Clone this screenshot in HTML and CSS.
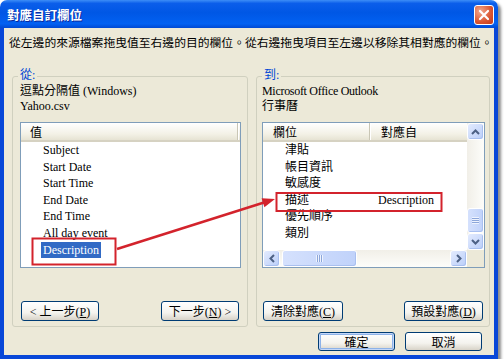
FILE: index.html
```html
<!DOCTYPE html>
<html lang="zh-Hant">
<head>
  <meta charset="UTF-8" />
  <title>對應自訂欄位</title>
  <link rel="stylesheet" href="styles.css">
</head>

<body>

  <div class="window">
    <div class="titlebar">
      <span class="title">對應自訂欄位</span>
      <button class="close-btn" aria-label="關閉">
        <svg width="12" height="12" viewBox="0 0 12 12">
          <path d="M2 2 L10 10 M10 2 L2 10" stroke="#fff" stroke-width="2.2" stroke-linecap="round" />
        </svg>
      </button>
    </div>

    <div class="client">
      <p class="hint">從左邊的來源檔案拖曳值至右邊的目的欄位。從右邊拖曳項目至左邊以移除其相對應的欄位。</p>

      <div class="groups">
        <!-- Quelle -->
        <fieldset class="group group-from">
          <legend>從:</legend>
          <div class="src-name">逗點分隔值 (Windows)</div>
          <div class="src-file">Yahoo.csv</div>

          <div class="listview">
            <div class="lv-header">
              <span class="lv-col lv-col-value">值</span>
            </div>
            <ul class="lv-rows">
              <li>Subject</li>
              <li>Start Date</li>
              <li>Start Time</li>
              <li>End Date</li>
              <li>End Time</li>
              <li>All day event</li>
              <li><span class="selected">Description</span></li>
            </ul>
          </div>

          <div class="group-buttons">
            <button class="btn btn-prev">&lt; 上一步(<u>P</u>)</button>
            <button class="btn btn-next">下一步(<u>N</u>) &gt;</button>
          </div>
        </fieldset>

        <!-- Ziel -->
        <fieldset class="group group-to">
          <legend>到:</legend>
          <div class="src-name">Microsoft Office Outlook</div>
          <div class="src-file">行事曆</div>

          <div class="listview listview-grid">
            <div class="lv-main">
              <div class="lv-header">
                <span class="lv-col lv-col-field">欄位</span>
                <span class="lv-col lv-col-map">對應自</span>
              </div>
              <ul class="lv-rows lv-rows-2col">
                <li><span>津貼</span><span></span></li>
                <li><span>帳目資訊</span><span></span></li>
                <li><span>敏感度</span><span></span></li>
                <li><span>描述</span><span>Description</span></li>
                <li><span>優先順序</span><span></span></li>
                <li><span>類別</span><span></span></li>
              </ul>
            </div>

            <div class="vscroll">
              <div class="sb-btn">
                <svg width="9" height="6" viewBox="0 0 9 6"><polyline points="1,5 4.5,1.5 8,5" fill="none" stroke="#4D6185" stroke-width="2" /></svg>
              </div>
              <div class="sb-track sb-track-v">
                <div class="sb-thumb sb-thumb-v"><span class="grip grip-h"></span></div>
              </div>
              <div class="sb-btn">
                <svg width="9" height="6" viewBox="0 0 9 6"><polyline points="1,1 4.5,4.5 8,1" fill="none" stroke="#4D6185" stroke-width="2" /></svg>
              </div>
            </div>

            <div class="hscroll">
              <div class="sb-btn">
                <svg width="6" height="9" viewBox="0 0 6 9"><polyline points="5,1 1.5,4.5 5,8" fill="none" stroke="#4D6185" stroke-width="2" /></svg>
              </div>
              <div class="sb-track sb-track-h">
                <div class="sb-thumb sb-thumb-h"><span class="grip grip-v"></span></div>
              </div>
              <div class="sb-btn">
                <svg width="6" height="9" viewBox="0 0 6 9"><polyline points="1,1 4.5,4.5 1,8" fill="none" stroke="#4D6185" stroke-width="2" /></svg>
              </div>
            </div>

            <div class="sb-corner"></div>
          </div>

          <div class="group-buttons">
            <button class="btn btn-clear">清除對應(<u>C</u>)</button>
            <button class="btn btn-default">預設對應(<u>D</u>)</button>
          </div>
        </fieldset>
      </div>

      <div class="dialog-buttons">
        <button class="btn btn-ok">確定</button>
        <button class="btn btn-cancel">取消</button>
      </div>
    </div>

    <!-- Markierungen / Pfeil -->
    <svg class="annotations" width="498" height="359" viewBox="0 0 498 359">
      <rect x="32.5" y="238.5" width="83" height="26" fill="none" stroke="#D3232C" stroke-width="2" />
      <rect x="276.5" y="193" width="165" height="18" fill="none" stroke="#D3232C" stroke-width="2" />
      <line x1="117" y1="249" x2="264" y2="202.5" stroke="#D3232C" stroke-width="2.5" />
      <polygon points="275,199 264.4,207.3 261.6,198.3" fill="#D3232C" />
    </svg>
  </div>

</body>
</html>
```

FILE: styles.css
```css
body {
  margin: 0;
  background: #fff;
  font-family: "Liberation Serif", "Noto Sans CJK TC", serif;
  font-size: 12px;
  color: #000;
}

.window {
  position: relative;
  width: 498px;
  height: 359px;
  display: flex;
  flex-direction: column;
  border-radius: 7px 7px 0 0;
  box-shadow: 3px 3px 3px rgba(0,0,0,0.45);
}

.titlebar {
  flex: none;
  height: 28px;
  box-sizing: border-box;
  padding: 1px 4px 0 7px;
  display: flex;
  align-items: center;
  justify-content: space-between;
  border-radius: 7px 7px 0 0;
  background: linear-gradient(#3D8EF7 0%, #0B5EEA 12%, #0057E5 45%, #0261F2 85%, #0049D3 100%);
}

.title {
  color: #fff;
  font-family: "Noto Sans CJK TC", sans-serif;
  font-weight: bold;
  font-size: 12.5px;
  line-height: 16px;
  text-shadow: 1px 1px 0 #0A2A9C;
}

.close-btn {
  width: 20px;
  height: 20px;
  padding: 0;
  border: 1px solid #fff;
  border-radius: 3px;
  background: radial-gradient(circle at 30% 30%, #F2A98F, #DA5530 60%, #C23B1C);
  display: flex;
  align-items: center;
  justify-content: center;
}

.client {
  flex: 1;
  background: #ECE9D8;
  border: 4px solid #0847D8;
  border-top: 0;
  padding-top: 6px;
  display: flex;
  flex-direction: column;
}

.hint {
  margin: 0;
  padding-left: 5px;
  font-family: "Noto Sans CJK TC", sans-serif;
  font-size: 11.8px;
  line-height: 16px;
  white-space: nowrap;
}

.groups {
  display: flex;
  gap: 8px;
  margin-top: 18px;
  padding-left: 8px;
}

.group {
  margin: 0;
  height: 259px;
  min-width: 0;
  box-sizing: border-box;
  border: 1px solid #D0D0BF;
  border-radius: 3px;
}

.group-from {
  width: 236px;
  padding: 0 6px 5px 7px;
}

.group-to {
  width: 234px;
  padding: 0 4px 5px 5px;
}

.group legend {
  padding: 0 2px 2px;
  line-height: 14px;
  color: #0046D5;
}

.group-from legend {
  margin-left: -2px;
}

.src-name {
  line-height: 14px;
  white-space: nowrap;
}

.group-to .src-name {
  letter-spacing: -0.3px;
}

.src-file {
  line-height: 16px;
  white-space: nowrap;
}

/* Listenansicht */
.listview {
  margin-top: 8px;
  height: 146px;
  box-sizing: border-box;
  border: 1px solid #7F9DB9;
  background: #fff;
  overflow: hidden;
}

.lv-header {
  height: 19px;
  box-sizing: border-box;
  display: flex;
  background: linear-gradient(#FFFFFF, #F3F1E6 65%, #E6E3D3);
  border-bottom: 2px solid #D6D2C2;
}

.lv-col {
  box-sizing: border-box;
  line-height: 17px;
  font-family: "Noto Sans CJK TC", sans-serif;
  border-right: 1px solid #C9C6B5;
  box-shadow: 1px 0 0 #fff;
}

.lv-col-value {
  width: 217px;
  padding-left: 9px;
}

.lv-col-field {
  width: 107px;
  padding-left: 10px;
}

.lv-col-map {
  flex: 1;
  padding-left: 11px;
  border-right: 0;
  box-shadow: none;
}

.lv-rows {
  margin: 0;
  padding: 0;
  list-style: none;
}

.lv-rows li {
  height: 16.6px;
  line-height: 16.6px;
  padding-left: 22px;
  white-space: nowrap;
}

.selected {
  margin-left: -2px;
  padding: 1px 2px;
  background: #316AC5;
  color: #fff;
}

.lv-rows-2col li {
  display: grid;
  grid-template-columns: 107px 1fr;
  padding-left: 0;
}

.lv-rows-2col li span:first-child {
  padding-left: 22px;
}

.lv-rows-2col li span:last-child {
  padding-left: 8px;
}

.listview-grid {
  display: grid;
  grid-template-columns: 1fr 17px;
  grid-template-rows: 1fr 17px;
}

.lv-main {
  overflow: hidden;
  min-width: 0;
}

/* Bildlaufleisten */
.vscroll {
  display: flex;
  flex-direction: column;
  background: linear-gradient(90deg, #F1EFE8, #FDFDFA);
}

.hscroll {
  display: flex;
  background: linear-gradient(#F1EFE8, #FDFDFA);
}

.sb-btn {
  flex: none;
  width: 17px;
  height: 17px;
  box-sizing: border-box;
  border: 1px solid #fff;
  border-radius: 3px;
  background: linear-gradient(135deg, #E3EBFE, #BACEF9);
  box-shadow: inset -1px -1px 0 #A9C0F0;
  display: flex;
  align-items: center;
  justify-content: center;
}

.sb-track {
  flex: 1;
  display: flex;
}

.sb-track-v {
  flex-direction: column;
  justify-content: flex-end;
}

.sb-thumb {
  box-sizing: border-box;
  border: 1px solid #fff;
  border-radius: 3px;
  background: linear-gradient(90deg, #D5E1FD, #C0D2FA);
  box-shadow: inset -1px -1px 0 #A9C0F0;
  display: flex;
  align-items: center;
  justify-content: center;
}

.sb-thumb-v {
  height: 25px;
}

.sb-thumb-h {
  width: 75px;
  margin-left: 2px;
}

.grip-h {
  width: 7px;
  height: 7px;
  background: repeating-linear-gradient(#EEF3FE 0 1px, #8CA6DA 1px 2px);
}

.grip-v {
  width: 7px;
  height: 7px;
  background: repeating-linear-gradient(90deg, #EEF3FE 0 1px, #8CA6DA 1px 2px);
}

.sb-corner {
  background: #ECE9D8;
}

/* Schaltflächen */
.btn {
  height: 20px;
  padding: 0;
  box-sizing: border-box;
  border: 1px solid #003C74;
  border-radius: 3px;
  background: linear-gradient(#FFFFFF, #F4F3EE 60%, #D8D3C8);
  font-family: "Liberation Serif", "Noto Sans CJK TC", serif;
  font-size: 12px;
  color: #000;
  white-space: nowrap;
}

.group-buttons {
  display: flex;
  justify-content: space-between;
  margin-top: 33px;
  padding: 0 2px 0 1px;
}

.btn-prev,
.btn-next {
  width: 78px;
}

.btn-clear {
  width: 80px;
}

.btn-default {
  width: 79px;
}

.dialog-buttons {
  display: flex;
  justify-content: flex-end;
  gap: 10px;
  margin-top: 5px;
  padding-right: 12px;
}

.btn-ok,
.btn-cancel {
  width: 77px;
  height: 19px;
}

.btn-ok {
  box-shadow: inset 0 0 0 1px #C4D7F8, inset 0 0 0 2px #8DB2E8;
}

.annotations {
  position: absolute;
  left: 0;
  top: 0;
  pointer-events: none;
}
```
